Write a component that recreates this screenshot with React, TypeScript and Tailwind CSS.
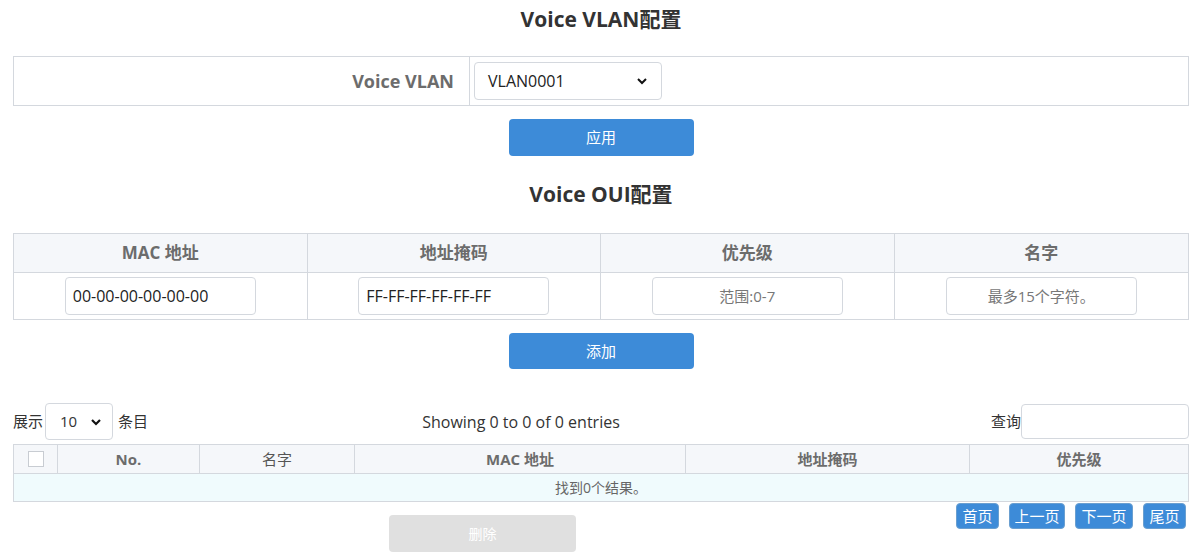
export default function App() {
  const font = "font-['Open_Sans','Noto_Sans_CJK_SC',sans-serif]";
  return (
    <div className={`${font} w-[1204px] h-[559px] bg-white text-[#333] pl-[13px] pr-[15px] overflow-hidden`}>
      <h2 className="text-center text-[21px] font-bold leading-[24px] pt-[7px] h-[56px] text-[#333]">Voice VLAN配置</h2>

      <div className="flex h-[50px] border border-[#d4d8de]">
        <div className="w-[456px] border-r border-[#d4d8de] flex items-center justify-end pr-[15px] text-[18px] font-bold text-[#6c6c6c]">
          Voice VLAN
        </div>
        <div className="flex items-center pl-[4px]">
          <div className="w-[188px] h-[38px] border border-[#d4d8de] rounded-[4px] flex items-center justify-between px-[13px] text-[16px] text-[#222]">
            <span>VLAN0001</span>
            <svg width="12" height="12" viewBox="0 0 12 12"><path d="M2 4l4 4 4-4" fill="none" stroke="#111" strokeWidth="2" /></svg>
          </div>
        </div>
      </div>

      <div className="flex justify-center pt-[13px]">
        <button className="w-[185px] h-[37px] rounded-[4px] bg-[#3d8bd8] text-white text-[15px]">应用</button>
      </div>

      <h2 className="text-center text-[21px] font-bold leading-[24px] mt-[26px] h-[52px] text-[#333]">Voice OUI配置</h2>

      <div className="border border-[#d4d8de] -mt-[1px]">
        <div className="grid grid-cols-4 h-[39px] bg-[#f5f7fa] border-b border-[#d4d8de] text-[17px] font-bold text-[#6c6c6c]">
          {["MAC 地址", "地址掩码", "优先级", "名字"].map((h, i) => (
            <div key={h} className={`flex items-center justify-center ${i < 3 ? "border-r border-[#d4d8de]" : ""}`}>{h}</div>
          ))}
        </div>
        <div className="grid grid-cols-4 h-[46px]">
          {[
            { v: "00-00-00-00-00-00", p: false },
            { v: "FF-FF-FF-FF-FF-FF", p: false },
            { v: "范围:0-7", p: true },
            { v: "最多15个字符。", p: true },
          ].map((c, i) => (
            <div key={i} className={`flex items-center justify-center ${i < 3 ? "border-r border-[#d4d8de]" : ""}`}>
              <div className={`w-[191px] h-[38px] border border-[#d4d8de] rounded-[4px] flex items-center ${c.p ? "justify-center text-[15px] text-[#777]" : "pl-[7px] text-[16px] text-[#222]"}`}>
                {c.v}
              </div>
            </div>
          ))}
        </div>
      </div>

      <div className="flex justify-center pt-[13px]">
        <button className="w-[185px] h-[36px] rounded-[4px] bg-[#3d8bd8] text-white text-[15px]">添加</button>
      </div>

      <div className="flex items-center mt-[34px] h-[37px] text-[15px] text-[#333]">
        <div className="flex items-center w-[220px]">
          <span>展示</span>
          <div className="ml-[2px] w-[68px] h-[37px] border border-[#d4d8de] rounded-[4px] flex items-center justify-between pl-[14px] pr-[10px]">
            <span className="text-[15px]">10</span>
            <svg width="12" height="12" viewBox="0 0 12 12"><path d="M2 4l4 4 4-4" fill="none" stroke="#111" strokeWidth="2.2" /></svg>
          </div>
          <span className="ml-[5px]">条目</span>
        </div>
        <div className="flex-1 text-center text-[16px]">Showing 0 to 0 of 0 entries</div>
        <div className="flex items-center w-[380px] justify-end">
          <span>查询</span>
          <div className="w-[168px] h-[35px] border border-[#d4d8de] rounded-[4px]" />
        </div>
      </div>

      <div className="mt-[4px] border border-[#d4d8de]">
        <div className="flex h-[29px] bg-[#f5f7fa] border-b border-[#d4d8de] text-[15px] font-bold text-[#6c6c6c]">
          <div className="w-[44px] border-r border-[#d4d8de] flex items-center justify-center">
            <div className="w-[16px] h-[16px] border border-[#c8ccd2] bg-white" />
          </div>
          <div className="w-[142px] border-r border-[#d4d8de] flex items-center justify-center">No.</div>
          <div className="w-[155px] border-r border-[#d4d8de] flex items-center justify-center font-normal text-[#555]">名字</div>
          <div className="w-[331px] border-r border-[#d4d8de] flex items-center justify-center">MAC 地址</div>
          <div className="w-[284px] border-r border-[#d4d8de] flex items-center justify-center">地址掩码</div>
          <div className="flex-1 flex items-center justify-center">优先级</div>
        </div>
        <div className="h-[27px] bg-[#f0fbfd] flex items-center justify-center text-[14px] text-[#666]">找到0个结果。</div>
      </div>

      <div className="flex justify-between h-[60px]">
        <div className="pl-[376px] pt-[13px]">
          <button className="w-[187px] h-[37px] rounded-[4px] bg-[#e0e0e0] text-white text-[14px]">删除</button>
        </div>
        <div className="flex gap-[10px] pt-[1px] pr-[3px]">
          {[
            ["首页", "w-[43px]"],
            ["上一页", "w-[56px]"],
            ["下一页", "w-[58px]"],
            ["尾页", "w-[43px]"],
          ].map(([t, w]) => (
            <button key={t} className={`${w} h-[26px] rounded-[4px] bg-[#3d8bd8] border border-[#6a9fd0] text-white text-[15px] leading-none`}>{t}</button>
          ))}
        </div>
      </div>
    </div>
  );
}
